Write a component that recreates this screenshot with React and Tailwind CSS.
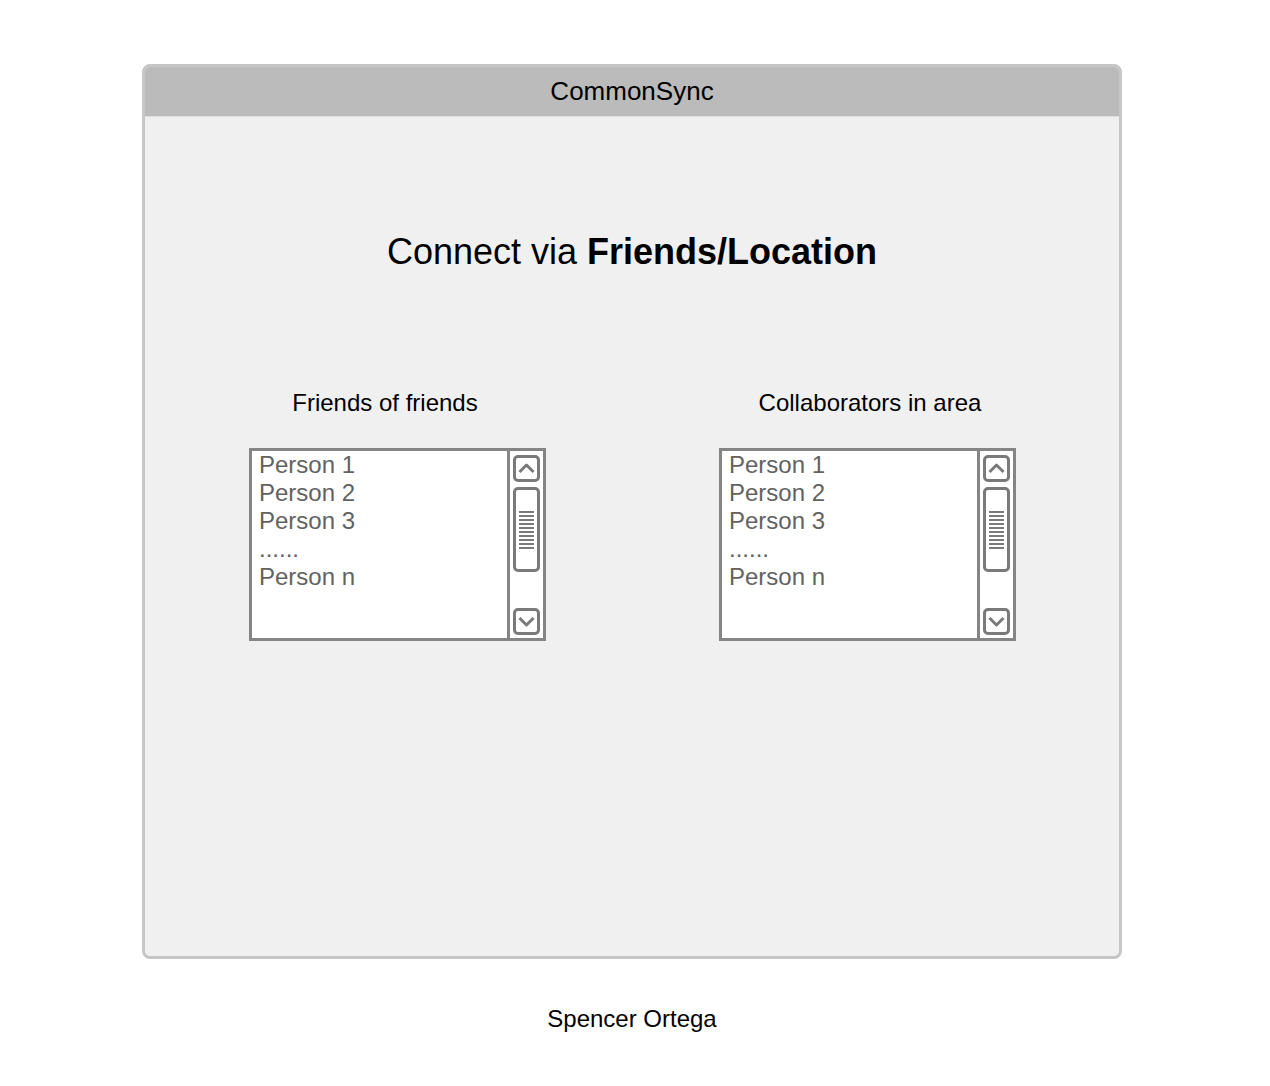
import React from 'react';

const people = ['Person 1', 'Person 2', 'Person 3', '......', 'Person n'];

const Chevron = ({ up }) => (
  <svg viewBox="0 0 21 21" className="w-[21px] h-[21px]">
    <polyline
      points={up ? '3.5,14 10.5,7 17.5,14' : '3.5,7 10.5,14 17.5,7'}
      fill="none"
      stroke="#7a7a7a"
      strokeWidth="3"
      strokeLinejoin="round"
    />
  </svg>
);

const ListBox = () => (
  <div className="flex w-[297px] h-[193px] border-[3px] border-[#858585] bg-white">
    {/* items */}
    <div className="flex-1 pl-[7px] text-[24px] leading-[28px] text-[#626262]">
      {people.map((p) => (
        <div key={p}>{p}</div>
      ))}
    </div>

    {/* scrollbar */}
    <div className="w-[36px] border-l-[3px] border-[#858585] flex flex-col items-center pt-[4px] pb-[3px]">
      <div className="w-[27px] h-[27px] border-[3px] border-[#7a7a7a] rounded-[5px] flex items-center justify-center">
        <Chevron up />
      </div>
      <div className="mt-[5px] w-[27px] h-[85px] border-[3px] border-[#7a7a7a] rounded-[5px] flex flex-col items-center justify-center gap-[2px]">
        {Array.from({ length: 10 }).map((_, i) => (
          <div key={i} className="w-[15px] h-[2px] bg-[#7a7a7a]" />
        ))}
      </div>
      <div className="flex-1" />
      <div className="w-[27px] h-[27px] border-[3px] border-[#7a7a7a] rounded-[5px] flex items-center justify-center">
        <Chevron />
      </div>
    </div>
  </div>
);

const App = () => {
  return (
    <div className="min-h-[1086px] bg-white pt-[64px] font-['Liberation_Sans',Arial,sans-serif] text-black">
      <div className="ml-[142px] w-[980px]">
        {/* Window */}
        <div className="h-[895px] flex flex-col border-[3px] border-[#c6c6c6] rounded-[8px] overflow-hidden bg-[#f0f0f0]">
          <div className="h-[50px] shrink-0 bg-[#bbbbbb] border-b border-[#dddddd] flex items-center justify-center pb-[2px] text-[26px] leading-[30px]">
            CommonSync
          </div>

          <div className="flex-1">
            <h1 className="mt-[113px] text-center text-[36px] leading-[44px]">
              Connect via <span className="font-bold">Friends/Location</span>
            </h1>

            {/* Labels */}
            <div className="mt-[115px] flex pl-[104px] text-[24px] leading-[28px]">
              <div className="w-[272px] text-center">Friends of friends</div>
              <div className="ml-[199px] w-[300px] text-center">Collaborators in area</div>
            </div>

            {/* Lists */}
            <div className="mt-[31px] flex pl-[104px] gap-[173px]">
              <ListBox />
              <ListBox />
            </div>
          </div>
        </div>

        <div className="mt-[46px] text-center text-[24px] leading-[28px]">Spencer Ortega</div>
      </div>
    </div>
  );
};

export default App;
